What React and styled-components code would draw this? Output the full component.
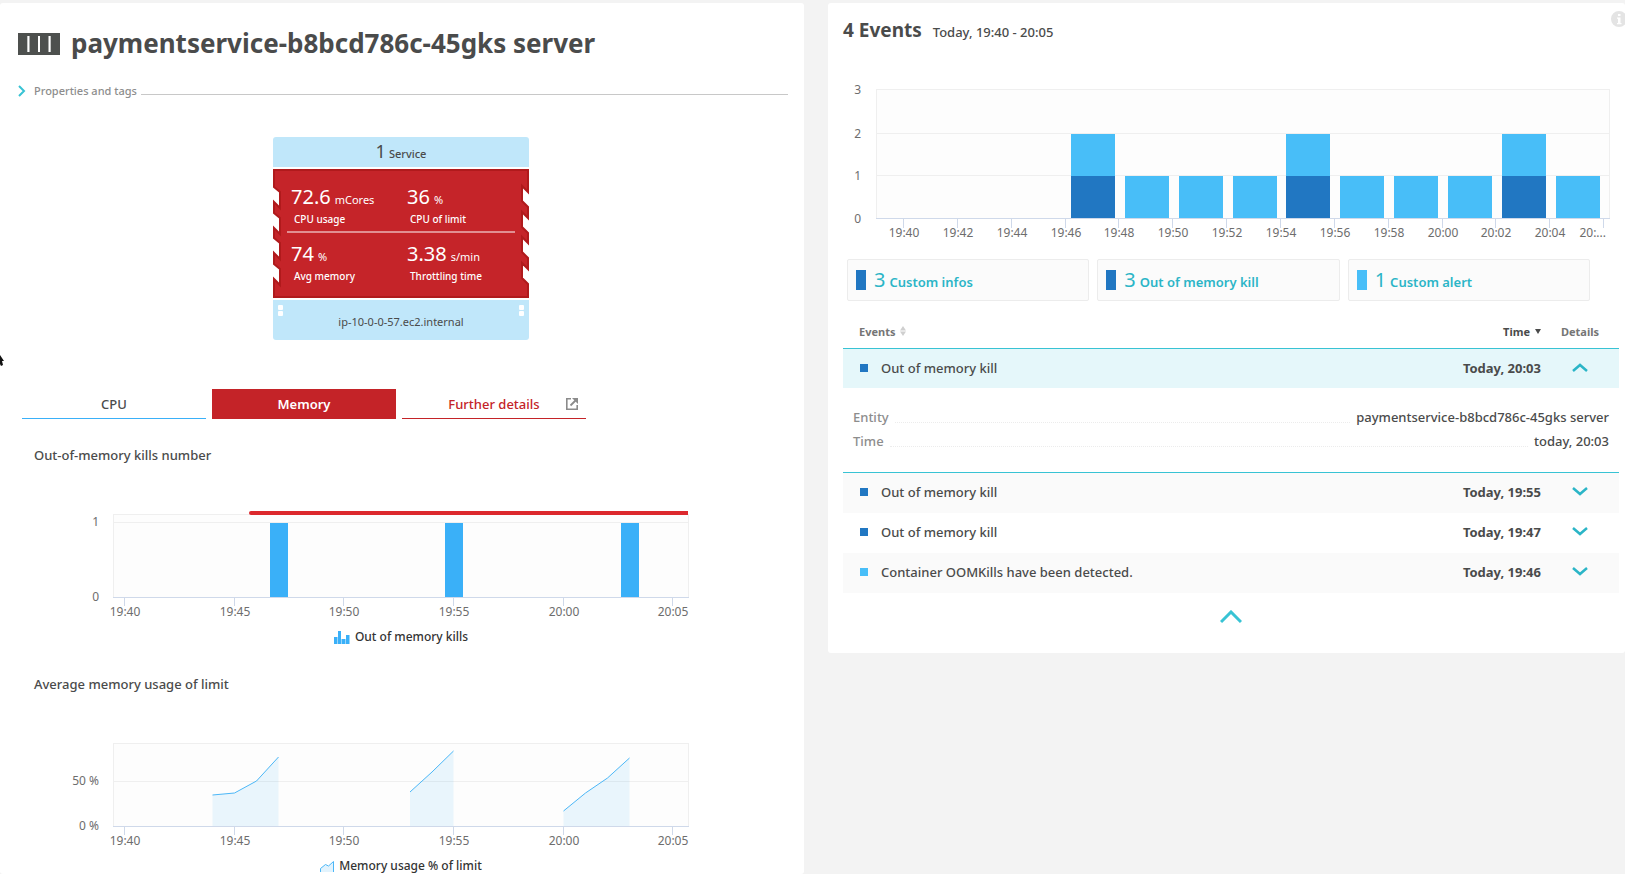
import React from "react";
import styled, { createGlobalStyle } from "styled-components";

const color = {
  page: "#f3f3f3",
  text: "#4a4b4b",
  muted: "#6d6d6d",
  soft: "#8d8d8d",
  teal: "#2bb5c7",
  line: "#38c3d4",
  red: "#c42328",
  bar: "#3ab0f8",
  deep: "#2177c2",
  sky: "#48bef8",
};

const GlobalStyle = createGlobalStyle`
  * { box-sizing: border-box; }
  body {
    margin: 0;
    background: ${color.page};
    color: ${color.text};
    font-family: "Noto Sans", "Open Sans", sans-serif;
    font-size: 13px;
    font-weight: 500;
  }
  h1, h2, h3, p, dl, dd { margin: 0; }
  button {
    font: inherit;
    color: inherit;
    background: none;
    border: 0;
    padding: 0;
    cursor: pointer;
  }
  svg { display: block; flex: none; }
`;

const Page = styled.div`
  display: grid;
  grid-template-columns: minmax(0, 804fr) minmax(0, 797fr);
  gap: 24px;
  align-items: start;
  padding-top: 3px;
  min-height: 100vh;
  overflow: hidden;
`;

const Panel = styled.section`
  position: relative;
  background: #fff;
  border-radius: 3px;
`;

const ServerPanel = styled(Panel)`
  align-self: stretch;
  padding: 21px 16px 0 18px;
`;

const EventsPanel = styled(Panel)`
  padding: 13px 6px 0 15px;
`;

const TitleRow = styled.header`
  display: flex;
  align-items: center;
  gap: 11px;
  height: 40px;
`;

const Title = styled.h1`
  padding-bottom: 2px;
  font-size: 26px;
  line-height: 38px;
  font-weight: 700;
`;

const PropertiesToggle = styled.button`
  display: flex;
  align-items: center;
  width: 100%;
  height: 20px;
  margin-top: 17px;
  font-size: 11px;
  line-height: 20px;
  color: ${color.soft};
`;

const ToggleLabel = styled.span`
  margin-left: 8px;
`;

const Rule = styled.span`
  flex: 1;
  height: 7px;
  margin-left: 4px;
  border-bottom: 1px solid #c8c8c8;
`;

const ServerBody = styled.div`
  padding-right: 4px;
`;

const Stack = styled.div`
  display: grid;
  gap: 2px;
  width: 256px;
  margin: 36px auto 49px;
`;

const ServiceLayer = styled.div`
  display: flex;
  align-items: baseline;
  justify-content: center;
  gap: 3px;
  height: 30px;
  background: #c0e7fa;
  border-radius: 3px 3px 0 0;
  font-size: 11px;
  line-height: 28px;
`;

const ServiceCount = styled.span`
  font-size: 18px;
  font-weight: 400;
`;

const MetricsLayer = styled.div`
  display: grid;
  height: 129px;
  color: #fff;
  > * { grid-area: 1 / 1; }
`;

const MetricRows = styled.div`
  position: relative;
  padding: 15px 14px 0;
`;

const MetricRow = styled.div`
  display: grid;
  grid-template-columns: 116px 1fr;
  height: 47px;
  & + & {
    height: 57px;
    padding-top: 8px;
    border-top: 2px solid #e18f92;
  }
`;

const Metric = styled.div`
  padding-left: 4px;
`;

const Reading = styled.div`
  display: flex;
  align-items: baseline;
  gap: 4px;
  font-size: 11px;
  font-weight: 400;
  line-height: 26px;
`;

const Value = styled.span`
  font-size: 20px;
`;

const Caption = styled.div`
  padding-left: 3px;
  font-size: 10px;
  line-height: 12px;
  font-weight: 500;
`;

const HostLayer = styled.div`
  display: flex;
  justify-content: space-between;
  height: 40px;
  padding: 5px 5px 0;
  background: #c0e7fa;
  border-radius: 0 0 3px 3px;
  font-size: 11px;
  font-weight: 400;
`;

const HostName = styled.span`
  line-height: 34px;
`;

const Tabs = styled.nav`
  display: flex;
  gap: 6px;
  margin-left: 4px;
`;

const Tab = styled.button`
  display: grid;
  grid-template-columns: 1fr auto 1fr;
  align-items: center;
  width: 184px;
  height: 30px;
  font-weight: ${(p) => (p.$active ? 600 : 500)};
  color: ${(p) => (p.$active ? "#fff" : p.$tone || color.text)};
  background: ${(p) => (p.$active ? color.red : "transparent")};
  border-bottom: 1px solid ${(p) => (p.$active ? color.red : p.$tone || color.bar)};
  text-decoration: none;
`;

const TabLabel = styled.span`
  grid-column: 2;
`;

const TabIcon = styled.span`
  justify-self: end;
  margin-right: 8px;
`;

const ChartBlock = styled.figure`
  margin: 26px 0 0;
  & + & {
    margin-top: 29px;
  }
`;

const ChartTitle = styled.h3`
  margin-left: 16px;
  font-size: 13px;
  line-height: 20px;
  font-weight: 500;
`;

const Plot = styled.svg`
  width: 100%;
  height: auto;
  margin-top: ${(p) => p.$gap}px;
  text {
    font-size: 12px;
    font-weight: 400;
    fill: ${color.muted};
  }
`;

const Legend = styled.figcaption`
  display: flex;
  align-items: center;
  justify-content: center;
  gap: 5px;
  height: 16px;
  margin-top: 4px;
  font-size: 12px;
  line-height: 16px;
  color: #333;
`;

const EventsHeading = styled.header`
  display: flex;
  align-items: baseline;
  gap: 11px;
  font-size: 13px;
  line-height: 28px;
`;

const EventsTitle = styled.h2`
  font-size: 19px;
  font-weight: 700;
`;

const InfoButton = styled.button`
  position: absolute;
  top: 8px;
  right: -2px;
`;

const Filters = styled.div`
  display: grid;
  grid-template-columns: repeat(3, minmax(0, 1fr));
  gap: 8px;
  margin: 14px 29px 0 4px;
`;

const Filter = styled.button`
  display: flex;
  align-items: center;
  height: 42px;
  padding: 0 8px;
  background: #fbfbfb;
  border: 1px solid #ececec;
  border-radius: 2px;
  color: ${color.teal};
  font-weight: 600;
`;

const FilterText = styled.span`
  display: flex;
  align-items: baseline;
  gap: 4px;
  margin-left: 8px;
  padding-bottom: 2px;
`;

const FilterCount = styled.span`
  font-size: 20px;
  font-weight: 400;
`;

const Swatch = styled.span`
  display: block;
  width: ${(p) => (p.$tall ? 10 : 8)}px;
  height: ${(p) => (p.$tall ? 20 : 8)}px;
  background: ${(p) => p.$fill};
`;

const EventTable = styled.table`
  width: 100%;
  margin-top: 17px;
  border-spacing: 0;
  table-layout: fixed;
`;

const HeadCell = styled.th`
  width: ${(p) => p.$width || "auto"};
  height: 31px;
  padding: 0 0 4px;
  padding-left: ${(p) => p.$indent || 0}px;
  border-bottom: 1px solid ${color.line};
  font-size: 11px;
  font-weight: 700;
  text-align: ${(p) => p.$align || "left"};
  color: ${(p) => (p.$dark ? color.text : "#757575")};
`;

const SortButton = styled.button`
  display: inline-flex;
  align-items: center;
  gap: 5px;
`;

const EventRow = styled.tr`
  height: ${(p) => (p.$open ? 39 : 40)}px;
  background: ${(p) => (p.$open ? "#e5f7fa" : p.$shade ? "#fafafa" : "#fff")};
`;

const Cell = styled.td`
  padding: 0 0 2px;
`;

const NameCell = styled(Cell)`
  padding-left: 17px;
`;

const TimeCell = styled(Cell)`
  text-align: right;
  font-weight: 700;
`;

const EventName = styled.div`
  display: flex;
  align-items: center;
  gap: 13px;
`;

const ExpandButton = styled.button`
  display: block;
  margin: 0 auto;
`;

const DetailCell = styled.td`
  padding: 17px 10px 19px;
  border-bottom: 1px solid ${color.line};
`;

const DetailLine = styled.div`
  display: flex;
  align-items: center;
  gap: 6px;
  line-height: 24px;
`;

const DetailTerm = styled.dt`
  color: ${color.soft};
`;

const Leader = styled.span`
  flex: 1;
  height: 11px;
  border-bottom: 1px dotted #ececec;
`;

const CollapseBar = styled.div`
  display: flex;
  justify-content: center;
  height: 60px;
  padding-bottom: 12px;
`;

const Pointer = styled.svg`
  position: absolute;
  left: 0;
  top: 352px;
`;

function Chevron({ dir, width, height, stroke = color.teal, thick = 2 }) {
  const points = {
    up: `1,${height - 2} ${width / 2},2 ${width - 1},${height - 2}`,
    down: `1,1 ${width / 2},${height - 3} ${width - 1},1`,
    right: `1,1 ${width - 2},${height / 2} 1,${height - 1}`,
  }[dir];
  return (
    <svg width={width} height={height} aria-hidden="true">
      <polyline points={points} fill="none" stroke={stroke} strokeWidth={thick} />
    </svg>
  );
}

function ContainerIcon() {
  return (
    <svg width="42" height="22" viewBox="0 0 42 22" aria-hidden="true">
      <rect width="42" height="22" fill="#4d504e" />
      <path d="M10.5 3v16M21 3v16M31.5 3v16" stroke="#fff" strokeWidth="2" />
      <path d="M9.5 3v16M32.5 3v16" stroke="#c4c6c5" strokeWidth="1" />
    </svg>
  );
}

const NOTCHES = [19, 45, 70, 96];

function TornBackground() {
  const right = NOTCHES.map((y) => `V${y + 4}L249 ${y - 2}V${y + 13}L255 ${y + 19}`).join("");
  const left = [...NOTCHES]
    .reverse()
    .map((y) => `V${y + 14}L7 ${y + 20}V${y + 4}L1 ${y - 1}`)
    .join("");
  return (
    <svg width="256" height="129" viewBox="0 0 256 129" aria-hidden="true">
      <path
        d={`M1 1H255${right}V128H1${left}Z`}
        fill="#c52429"
        stroke="#b01a1c"
        strokeWidth="2"
      />
    </svg>
  );
}

function Dots() {
  return (
    <svg width="5" height="11" aria-hidden="true">
      <rect width="5" height="5" rx="1" fill="#fff" />
      <rect y="6" width="5" height="5" rx="1" fill="#fff" />
    </svg>
  );
}

function ExternalIcon() {
  return (
    <svg width="12" height="12" viewBox="0 0 12 12" aria-hidden="true">
      <path d="M5 .8H.8v10.4h10.4V7" fill="none" stroke="#8b8b8b" strokeWidth="1.6" />
      <path d="M4.5 7.5L9.5 2.5" stroke="#8b8b8b" strokeWidth="1.8" />
      <path d="M6 0H12v6z" fill="#8b8b8b" />
    </svg>
  );
}

function MetricItem({ value, unit, label }) {
  return (
    <Metric>
      <Reading>
        <Value>{value}</Value>
        {unit}
      </Reading>
      <Caption>{label}</Caption>
    </Metric>
  );
}

const MINUTE_TICKS = [
  ["19:40", 106],
  ["19:45", 216],
  ["19:50", 325],
  ["19:55", 435],
  ["20:00", 545],
  ["20:05", 654],
];

function MinuteFrame({ marks, label, children }) {
  return (
    <Plot $gap={40} viewBox="0 0 766 120" role="img" aria-label={label}>
      <rect x="95.5" y="9.5" width="575" height="83" fill="#fdfdfd" stroke="#efefef" />
      {marks.map(([text, y]) => (
        <g key={text}>
          <path d={`M96 ${y + 0.5}H670`} stroke="#efefef" />
          <text x="81" y={y + 4} textAnchor="end">
            {text}
          </text>
        </g>
      ))}
      {children}
      <path d="M95 92.5H671" stroke="#cfd9ea" />
      {MINUTE_TICKS.map(([text, x]) => (
        <g key={text}>
          <path d={`M${x + 0.5} 92V101`} stroke="#cfd9ea" />
          <text x={x + 1} y="111" textAnchor="middle">
            {text}
          </text>
        </g>
      ))}
    </Plot>
  );
}

const USAGE = [
  [[194.5, 61], [216.5, 59], [238.5, 47], [260.5, 23]],
  [[392, 58], [414, 38], [435.5, 17]],
  [[545.5, 77], [567.5, 59], [589.5, 44], [611.5, 24]],
];

function UsageArea({ points }) {
  const line = points.map((p) => p.join(",")).join(" ");
  const first = points[0][0];
  const last = points[points.length - 1][0];
  return (
    <g>
      <polygon points={`${first},92 ${line} ${last},92`} fill="#39b1f7" fillOpacity="0.1" />
      <polyline points={line} fill="none" stroke="#4bb7f7" strokeWidth="1" />
    </g>
  );
}

const EVENT_BUCKETS = [
  [228, 2], [282, 1], [336, 1], [390, 1], [443, 2],
  [497, 1], [551, 1], [605, 1], [659, 2], [713, 1],
];

const EVENT_TICKS = [
  "19:40", "19:42", "19:44", "19:46", "19:48", "19:50", "19:52",
  "19:54", "19:56", "19:58", "20:00", "20:02", "20:04", "20:...",
];

function EventsChart() {
  return (
    <Plot $gap={29} viewBox="0 0 776 170" role="img" aria-label="Events over time">
      <rect x="33.5" y="14.5" width="733" height="129" fill="#fdfdfd" stroke="#efefef" />
      <path d="M34 58.5H766M34 100.5H766" stroke="#efefef" />
      {[["3", 14], ["2", 58], ["1", 100], ["0", 143]].map(([text, y]) => (
        <text key={text} x="18" y={y + 5} textAnchor="end">
          {text}
        </text>
      ))}
      {EVENT_BUCKETS.map(([x, count]) => (
        <g key={x}>
          {count === 2 && <rect x={x} y="59" width="44" height="42" fill={color.sky} />}
          <rect
            x={x}
            y="101"
            width="44"
            height="42"
            fill={count === 2 ? color.deep : color.sky}
          />
        </g>
      ))}
      <path d="M33 143.5H767" stroke="#cfd9ea" />
      {EVENT_TICKS.map((text, i) => {
        const x = Math.round(60 + i * 53.86);
        const last = i === EVENT_TICKS.length - 1;
        return (
          <g key={text}>
            <path d={`M${x + 0.5} 144V153`} stroke="#cfd9ea" />
            <text x={last ? 763 : x + 1} y="162" textAnchor={last ? "end" : "middle"}>
              {text}
            </text>
          </g>
        );
      })}
    </Plot>
  );
}

const FILTERS = [
  [3, "Custom infos", color.deep],
  [3, "Out of memory kill", color.deep],
  [1, "Custom alert", color.sky],
];

const EVENTS = [
  { name: "Out of memory kill", time: "Today, 20:03", fill: color.deep, open: true },
  { name: "Out of memory kill", time: "Today, 19:55", fill: color.deep },
  { name: "Out of memory kill", time: "Today, 19:47", fill: color.deep },
  { name: "Container OOMKills have been detected.", time: "Today, 19:46", fill: color.sky },
];

function ServerDetails() {
  return (
    <ServerPanel>
      <TitleRow>
        <ContainerIcon />
        <Title>paymentservice-b8bcd786c-45gks server</Title>
      </TitleRow>
      <PropertiesToggle type="button" aria-expanded="false">
        <Chevron dir="right" width={8} height={12} stroke={color.line} />
        <ToggleLabel>Properties and tags</ToggleLabel>
        <Rule />
      </PropertiesToggle>

      <ServerBody>
        <Stack>
          <ServiceLayer>
            <ServiceCount>1</ServiceCount>
            Service
          </ServiceLayer>
          <MetricsLayer>
            <TornBackground />
            <MetricRows>
              <MetricRow>
                <MetricItem value="72.6" unit="mCores" label="CPU usage" />
                <MetricItem value="36" unit="%" label="CPU of limit" />
              </MetricRow>
              <MetricRow>
                <MetricItem value="74" unit="%" label="Avg memory" />
                <MetricItem value="3.38" unit="s/min" label="Throttling time" />
              </MetricRow>
            </MetricRows>
          </MetricsLayer>
          <HostLayer>
            <Dots />
            <HostName>ip-10-0-0-57.ec2.internal</HostName>
            <Dots />
          </HostLayer>
        </Stack>

        <Tabs>
          <Tab type="button">
            <TabLabel>CPU</TabLabel>
          </Tab>
          <Tab type="button" $active>
            <TabLabel>Memory</TabLabel>
          </Tab>
          <Tab as="a" href="#details" $tone={color.red}>
            <TabLabel>Further details</TabLabel>
            <TabIcon>
              <ExternalIcon />
            </TabIcon>
          </Tab>
        </Tabs>

        <ChartBlock>
          <ChartTitle>Out-of-memory kills number</ChartTitle>
          <MinuteFrame marks={[["1", 17], ["0", 92]]} label="Out-of-memory kills number">
            {[252, 427, 603].map((x) => (
              <rect key={x} x={x} y="18" width="18" height="74" fill={color.bar} />
            ))}
            <path d="M670 6H233a2 2 0 0 0 0 4H670z" fill="#dc282d" />
          </MinuteFrame>
          <Legend>
            <svg width="16" height="13" aria-hidden="true">
              <path d="M0 6h3v7H0zM4 0h3v13H4zM8 8h3v5H8zM12 4h3v9h-3z" fill={color.bar} />
              <path d="M3 6h1v7H3zM7 8h1v5H7zM11 8h1v5h-1zM15 4h1v9h-1z" fill="#9bd6fb" />
            </svg>
            Out of memory kills
          </Legend>
        </ChartBlock>

        <ChartBlock>
          <ChartTitle>Average memory usage of limit</ChartTitle>
          <MinuteFrame marks={[["50 %", 47], ["0 %", 92]]} label="Average memory usage of limit">
            {USAGE.map((points) => (
              <UsageArea key={points[0][0]} points={points} />
            ))}
          </MinuteFrame>
          <Legend>
            <svg width="14" height="12" aria-hidden="true">
              <path
                d="M.5 12V8.500L5.500 4.500L8.500 6L13.500 1.500V12"
                fill="#e2f3fd"
                stroke="#4bb7f7"
              />
            </svg>
            Memory usage % of limit
          </Legend>
        </ChartBlock>
      </ServerBody>
    </ServerPanel>
  );
}

function Events() {
  return (
    <EventsPanel>
      <EventsHeading>
        <EventsTitle>4 Events</EventsTitle>
        <span>Today, 19:40 - 20:05</span>
      </EventsHeading>
      <InfoButton type="button" aria-label="Information">
        <svg width="16" height="16" aria-hidden="true">
          <circle cx="8" cy="8" r="8" fill="#e4e4e4" />
          <path d="M7 3h2.500v2H7zM6 6.500h3.500V12h1v1.200H6V12h1V7.700H6z" fill="#fff" />
        </svg>
      </InfoButton>

      <EventsChart />

      <Filters>
        {FILTERS.map(([count, label, fill]) => (
          <Filter key={label} type="button">
            <Swatch $tall $fill={fill} />
            <FilterText>
              <FilterCount>{count}</FilterCount>
              {label}
            </FilterText>
          </Filter>
        ))}
      </Filters>

      <EventTable>
        <thead>
          <tr>
            <HeadCell scope="col" $indent={16}>
              <SortButton type="button">
                Events
                <svg width="6" height="10" aria-hidden="true">
                  <path d="M0 4.500L3 0l3 4.500zM0 5.500h6L3 10z" fill="#cfcfcf" />
                </svg>
              </SortButton>
            </HeadCell>
            <HeadCell scope="col" $width="160px" $align="right" $dark>
              <SortButton type="button">
                Time
                <svg width="6" height="5" aria-hidden="true">
                  <path d="M0 0h6L3 5z" fill={color.text} />
                </svg>
              </SortButton>
            </HeadCell>
            <HeadCell scope="col" $width="78px" $align="center">
              Details
            </HeadCell>
          </tr>
        </thead>
        <tbody>
          {EVENTS.map((event, i) => (
            <React.Fragment key={event.time}>
              <EventRow $open={event.open} $shade={i % 2 === 1}>
                <NameCell>
                  <EventName>
                    <Swatch $fill={event.fill} />
                    {event.name}
                  </EventName>
                </NameCell>
                <TimeCell>{event.time}</TimeCell>
                <Cell>
                  <ExpandButton
                    type="button"
                    aria-expanded={!!event.open}
                    aria-label={`Details of ${event.name}`}
                  >
                    <Chevron
                      dir={event.open ? "up" : "down"}
                      width={16}
                      height={10}
                      thick={2.5}
                    />
                  </ExpandButton>
                </Cell>
              </EventRow>
              {event.open && (
                <tr>
                  <DetailCell colSpan={3}>
                    <dl>
                      <DetailLine>
                        <DetailTerm>Entity</DetailTerm>
                        <Leader />
                        <dd>paymentservice-b8bcd786c-45gks server</dd>
                      </DetailLine>
                      <DetailLine>
                        <DetailTerm>Time</DetailTerm>
                        <Leader />
                        <dd>today, 20:03</dd>
                      </DetailLine>
                    </dl>
                  </DetailCell>
                </tr>
              )}
            </React.Fragment>
          ))}
        </tbody>
      </EventTable>
      <CollapseBar>
        <button type="button" aria-label="Collapse list">
          <Chevron dir="up" width={22} height={14} stroke={color.line} thick={3} />
        </button>
      </CollapseBar>
    </EventsPanel>
  );
}

export default function App() {
  return (
    <>
      <GlobalStyle />
      <Page>
        <ServerDetails />
        <Events />
      </Page>
      <Pointer width="5" height="16" aria-hidden="true">
        <path d="M0 3L4 9H2L3 13L1 14L0 12z" fill="#111" />
      </Pointer>
    </>
  );
}
